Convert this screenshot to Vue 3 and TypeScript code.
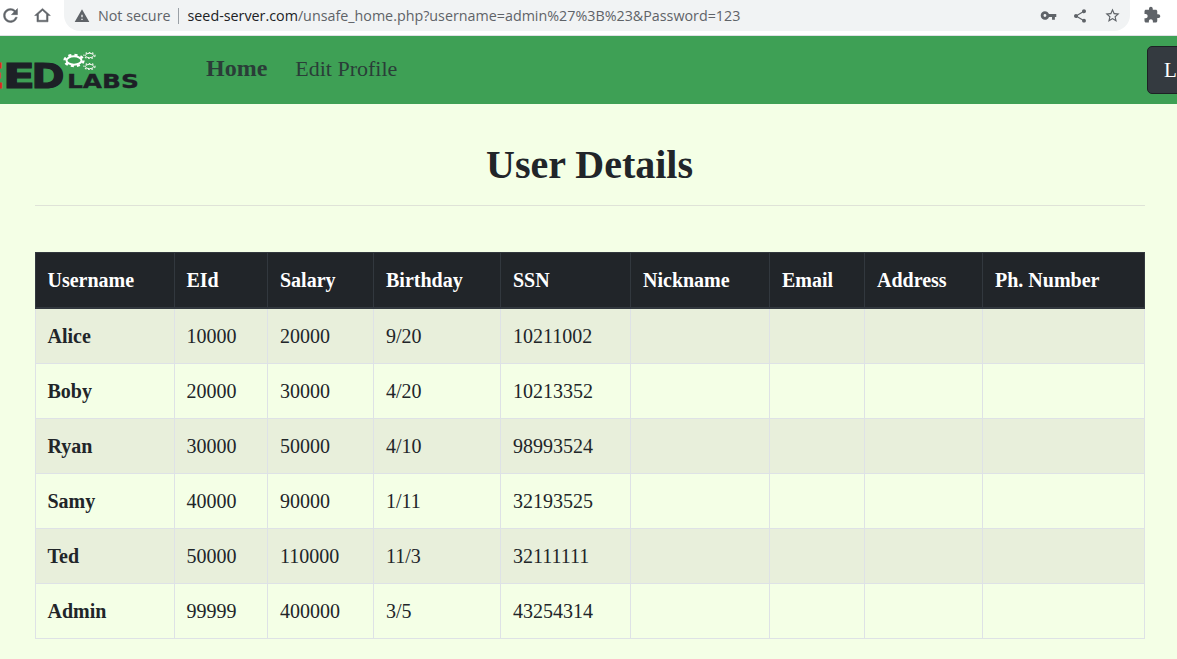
<script setup lang="ts">
interface Row { name: string; eid: string; salary: string; birthday: string; ssn: string }
const heads: string[] = ['Username', 'EId', 'Salary', 'Birthday', 'SSN', 'Nickname', 'Email', 'Address', 'Ph. Number']
const widths: number[] = [139, 93.5, 106, 127, 130, 139, 95, 118, 162]
const rows: Row[] = [
  { name: 'Alice', eid: '10000', salary: '20000', birthday: '9/20', ssn: '10211002' },
  { name: 'Boby', eid: '20000', salary: '30000', birthday: '4/20', ssn: '10213352' },
  { name: 'Ryan', eid: '30000', salary: '50000', birthday: '4/10', ssn: '98993524' },
  { name: 'Samy', eid: '40000', salary: '90000', birthday: '1/11', ssn: '32193525' },
  { name: 'Ted', eid: '50000', salary: '110000', birthday: '11/3', ssn: '32111111' },
  { name: 'Admin', eid: '99999', salary: '400000', birthday: '3/5', ssn: '43254314' },
]
</script>

<template>
  <div class="page">
    <header class="chrome">
      <svg class="ic reload" viewBox="0 0 24 24"><path d="M17.65 6.35A7.958 7.958 0 0 0 12 4c-4.42 0-7.99 3.58-7.99 8s3.57 8 7.99 8c3.73 0 6.84-2.55 7.73-6h-2.08A5.99 5.99 0 0 1 12 18c-3.31 0-6-2.69-6-6s2.69-6 6-6c1.66 0 3.14.69 4.22 1.78L13 11h7V4l-2.35 2.35z" /></svg>
      <svg class="ic home" viewBox="0 0 24 24"><path d="M12 5.69l5 4.5V18H7v-7.81l5-4.5M12 3L2 12h3v8h14v-8h3L12 3z" /></svg>
      <div class="pill">
        <svg class="warn" viewBox="0 0 24 24"><path d="M1 21h22L12 2 1 21zm12-3h-2v-2h2v2zm0-4h-2v-4h2v4z" /></svg>
        <span class="secure">Not secure</span>
        <span class="sep"></span>
        <span class="url"><span class="host">seed-server.com</span>/unsafe_home.php?username=admin%27%3B%23&amp;Password=123</span>
        <svg class="ic key" viewBox="0 0 24 24"><path d="M12.65 10C11.83 7.67 9.61 6 7 6c-3.31 0-6 2.69-6 6s2.69 6 6 6c2.61 0 4.83-1.67 5.65-4H17v4h4v-4h2v-4H12.65zM7 14c-1.1 0-2-.9-2-2s.9-2 2-2 2 .9 2 2-.9 2-2 2z" /></svg>
        <svg class="ic share" viewBox="0 0 24 24"><path d="M18 16.08c-.76 0-1.44.3-1.96.77L8.91 12.7c.05-.23.09-.46.09-.7s-.04-.47-.09-.7l7.05-4.11c.54.5 1.25.81 2.04.81 1.66 0 3-1.34 3-3s-1.34-3-3-3-3 1.34-3 3c0 .24.04.47.09.7L8.04 9.81C7.5 9.31 6.79 9 6 9c-1.66 0-3 1.34-3 3s1.34 3 3 3c.79 0 1.5-.31 2.04-.81l7.12 4.16c-.05.21-.08.43-.08.65 0 1.61 1.31 2.92 2.92 2.92 1.61 0 2.92-1.31 2.92-2.92s-1.31-2.92-2.92-2.92z" /></svg>
        <svg class="ic star" viewBox="0 0 24 24"><path d="M22 9.24l-7.19-.62L12 2 9.19 8.63 2 9.24l5.46 4.73L5.82 21 12 17.27 18.18 21l-1.63-7.03L22 9.24zM12 15.4l-3.76 2.27 1-4.28-3.32-2.88 4.38-.38L12 6.1l1.71 4.04 4.38.38-3.32 2.88 1 4.28L12 15.4z" /></svg>
      </div>
      <svg class="ic ext" viewBox="0 0 24 24"><path d="M20.5 11H19V7c0-1.1-.9-2-2-2h-4V3.5C13 2.12 11.88 1 10.5 1S8 2.12 8 3.5V5H4c-1.1 0-1.99.9-1.99 2v3.8H3.5c1.49 0 2.7 1.21 2.7 2.7s-1.21 2.7-2.7 2.7H2V20c0 1.1.9 2 2 2h3.8v-1.5c0-1.49 1.21-2.7 2.7-2.7 1.49 0 2.7 1.21 2.7 2.7V22H17c1.1 0 2-.9 2-2v-4h1.5c1.38 0 2.5-1.12 2.5-2.5S21.88 11 20.5 11z" /></svg>
    </header>

    <nav class="nav">
      <svg class="logo" viewBox="0 0 140 68" width="140" height="68">
        <text class="logo-ed red" x="-26.5" y="52" textLength="31" lengthAdjust="spacingAndGlyphs">E</text>
        <text class="logo-ed" x="3" y="52" textLength="32" lengthAdjust="spacingAndGlyphs">E</text>
        <text class="logo-ed" x="31.5" y="52" textLength="33" lengthAdjust="spacingAndGlyphs">D</text>
        <text class="logo-labs" x="67" y="52" textLength="72" lengthAdjust="spacingAndGlyphs">LABS</text>
        <ellipse cx="74" cy="24.5" rx="7.5" ry="4.2" class="gear" />
        <ellipse cx="74" cy="24.5" rx="9.5" ry="5.5" class="gear-teeth" />
        <ellipse cx="89.5" cy="19.5" rx="4" ry="2.2" class="gear-small" />
        <ellipse cx="89.5" cy="19.5" rx="5.5" ry="3" class="gear-small-teeth" />
        <ellipse cx="89.5" cy="30.5" rx="4" ry="2.2" class="gear-small" />
        <ellipse cx="89.5" cy="30.5" rx="5.5" ry="3" class="gear-small-teeth" />
      </svg>
      <div class="links">
        <a class="link active">Home</a>
        <a class="link">Edit Profile</a>
      </div>
      <button class="logout" type="button">Logout</button>
    </nav>

    <main class="content">
      <h1 class="title">User Details</h1>
      <hr class="rule" />
      <table class="grid">
        <colgroup>
          <col v-for="(w, i) in widths" :key="i" :style="{ width: w + 'px' }" />
        </colgroup>
        <thead>
          <tr><th v-for="h in heads" :key="h">{{ h }}</th></tr>
        </thead>
        <tbody>
          <tr v-for="r in rows" :key="r.name">
            <th>{{ r.name }}</th>
            <td>{{ r.eid }}</td>
            <td>{{ r.salary }}</td>
            <td>{{ r.birthday }}</td>
            <td>{{ r.ssn }}</td>
            <td></td>
            <td></td>
            <td></td>
            <td></td>
          </tr>
        </tbody>
      </table>
    </main>
  </div>
</template>

<style>
html, body { margin: 0; height: 100%; overflow: hidden; background: #f4ffe6; }
</style>

<style scoped>
.page {
  width: 1177px;
  height: 659px;
  overflow: hidden;
  background: #f4ffe6;
  font-family: "Liberation Serif", serif;
  color: #212529;
}
.chrome {
  height: 36px;
  box-sizing: border-box;
  background: #fff;
  border-bottom: 1px solid #dfe1e5;
  display: flex;
  align-items: flex-start;
  font-family: "Open Sans", sans-serif;
}
.ic { fill: #5f6368; flex: none; display: block; }
.reload { width: 21px; height: 21px; margin: 5px 0 0 0; stroke: #5f6368; stroke-width: 0.5px; }
.home { width: 19px; height: 19px; margin: 6px 0 0 12px; stroke: #5f6368; stroke-width: 0.6px; }
.pill {
  width: 1066px;
  height: 31px;
  margin-left: 12px;
  background: #f1f3f4;
  border-radius: 0 0 16px 16px;
  display: flex;
  align-items: center;
  font-size: 14.3px;
  flex: none;
  padding-left: 10px;
  box-sizing: border-box;
}
.warn { width: 16px; height: 16px; fill: #5f6368; flex: none; }
.secure { margin-left: 8px; color: #5f6368; }
.sep { width: 1px; height: 16px; background: #9aa0a6; margin: 0 9px 0 7px; flex: none; }
.url { color: #5f6368; white-space: nowrap; flex: 1; }
.host { color: #202124; }
.key { width: 17px; height: 17px; margin-right: 15px; }
.share { width: 16px; height: 16px; margin-right: 16px; }
.star { width: 17px; height: 17px; margin-right: 9px; }
.ext { width: 18px; height: 18px; margin: 6px 0 0 13px; }

.nav {
  height: 68px;
  background: #3ea055;
  display: flex;
  align-items: flex-start;
  overflow: hidden;
}
.logo { flex: none; display: block; margin-right: 66px; }
.logo-ed {
  font-family: "DejaVu Sans", sans-serif;
  font-weight: 700;
  font-size: 34px;
  fill: #1d2026;
  stroke: #1d2026;
  stroke-width: 1.2px;
}
.logo-ed.red { fill: #d8281c; stroke: #d8281c; }
.logo-labs {
  font-family: "DejaVu Sans", sans-serif;
  font-weight: 700;
  font-size: 20px;
  fill: #1d2026;
  stroke: #1d2026;
  stroke-width: 0.3px;
}
.gear { fill: none; stroke: #fff; stroke-width: 2px; }
.gear-teeth { fill: none; stroke: #fff; stroke-width: 2.4px; stroke-dasharray: 3 3; }
.gear-small { fill: none; stroke: #f2f5ee; stroke-width: 1px; }
.gear-small-teeth { fill: none; stroke: #f2f5ee; stroke-width: 1.2px; stroke-dasharray: 1.6 1.6; }
.links {
  flex: 0 0 941px;
  display: flex;
  align-items: baseline;
  gap: 28px;
  padding-top: 16px;
  box-sizing: border-box;
}
.link { font-size: 22px; color: #2a3d38; line-height: 33px; }
.link.active { font-size: 24px; font-weight: 700; }
.logout {
  flex: none;
  width: 90px;
  height: 48px;
  margin-top: 10px;
  padding: 0 0 0 16px;
  text-align: left;
  background: #343a40;
  color: #fff;
  border: 1px solid #1d2124;
  border-radius: 5px;
  font: 21px "Liberation Serif", serif;
}

.content { padding: 0 32.5px 0 34.5px; }
.title {
  margin: 0;
  padding-top: 37px;
  font-size: 40px;
  line-height: 48px;
  font-weight: 700;
  text-align: center;
}
.rule {
  margin: 16px 0 46px;
  border: 0;
  border-top: 1px solid #dfe3d8;
}
.grid {
  width: 1109.5px;
  table-layout: fixed;
  border-collapse: collapse;
  font-size: 20px;
  line-height: 30px;
}
.grid th, .grid td {
  padding: 12px;
  text-align: left;
  border: 1px solid #dee2e6;
  vertical-align: top;
  font-weight: 400;
}
.grid th { font-weight: 700; }
.grid thead th {
  background: #212529;
  color: #fff;
  border-color: #32383e;
  border-bottom-width: 2px;
}
.grid tbody tr:nth-child(odd) { background: #e8efdb; }
</style>
